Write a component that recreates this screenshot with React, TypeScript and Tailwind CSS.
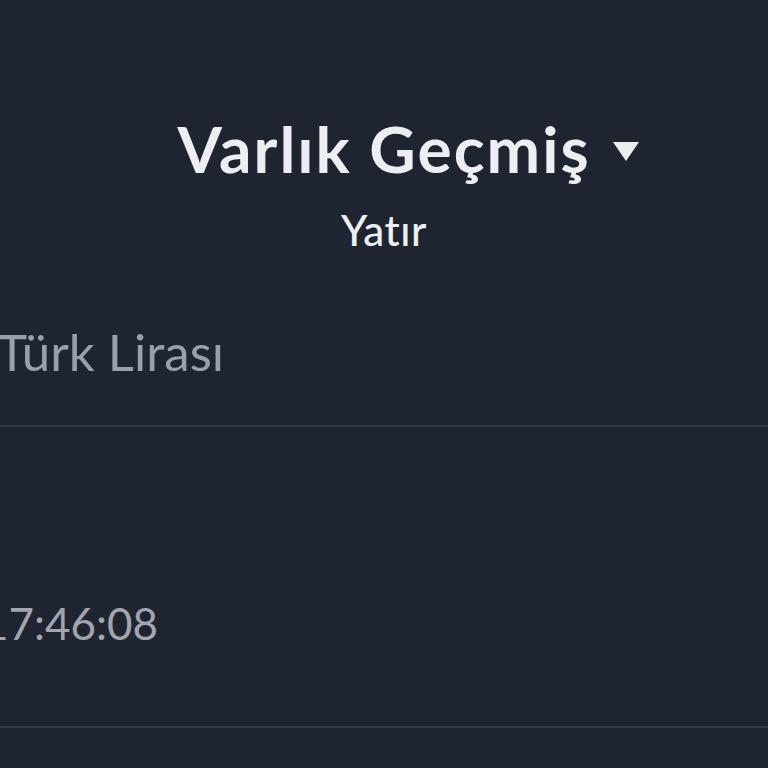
export default function App() {
  return (
    <div
      className="w-[768px] h-[768px] overflow-hidden bg-[#1f2530] text-[#eceef1]"
      style={{ fontFamily: 'Lato, "Open Sans", sans-serif' }}
    >
      {/* Header */}
      <div className="pt-[105px] flex flex-col items-center">
        <div className="relative">
          <h1 className="text-[64px] font-bold leading-[88px] tracking-[2px]">Varlık Geçmiş</h1>
          <svg
            className="absolute left-full top-[37px] ml-[22px]"
            width="26"
            height="19"
            viewBox="0 0 26 19"
          >
            <polygon points="0,0 26,0 13,19" fill="#eceef1" />
          </svg>
        </div>
        <div className="mt-[13px] text-[42px] font-medium leading-[48px] tracking-[0.5px]">Yatır</div>
      </div>

      {/* Currency row */}
      <div className="mt-[70px] h-[103px] border-b-2 border-[#353b46]">
        <div className="ml-[-3px] text-[51px] leading-[56px] text-[#9aa0ab]">Türk Lirası</div>
      </div>

      {/* Time row */}
      <div className="h-[301px] border-b-2 border-[#353b46] flex items-center">
        <div className="ml-[-17px] mt-[92px] text-[44px] leading-[52px] text-[#a0a5ae]">17:46:08</div>
      </div>
    </div>
  );
}
